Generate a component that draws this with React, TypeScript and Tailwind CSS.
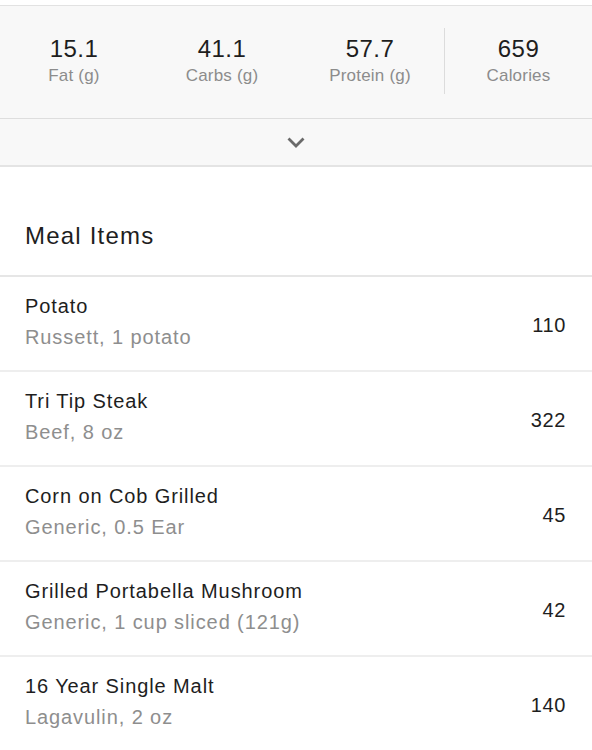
import React from "react";

const stats = [
  { v: "15.1", l: "Fat (g)" },
  { v: "41.1", l: "Carbs (g)" },
  { v: "57.7", l: "Protein (g)" },
  { v: "659", l: "Calories" },
];

const items = [
  { t: "Potato", s: "Russett, 1 potato", c: "110" },
  { t: "Tri Tip Steak", s: "Beef, 8 oz", c: "322" },
  { t: "Corn on Cob Grilled", s: "Generic, 0.5 Ear", c: "45" },
  { t: "Grilled Portabella Mushroom", s: "Generic, 1 cup sliced (121g)", c: "42" },
  { t: "16 Year Single Malt", s: "Lagavulin, 2 oz", c: "140" },
];

export default function App() {
  return (
    <div
      className="w-[592px] h-[750px] overflow-hidden bg-white text-[#222]"
      style={{ fontFamily: '"Liberation Sans", Arial, sans-serif' }}
    >
      <div className="h-[5px] bg-white" />
      <div className="bg-[#f8f8f8] border-t border-[#e2e2e2]">
        <div className="h-[113px] border-b border-[#dedede] flex items-start pt-[22px]">
          {stats.map((s, i) => (
            <div
              key={s.l}
              className={
                "w-[148px] h-[66px] flex flex-col items-center justify-center " +
                (i === 3 ? "border-l border-[#dcdcdc]" : "")
              }
            >
              <div className="text-[24px] leading-[28px] tracking-[0.5px] text-[#1e1e1e]">{s.v}</div>
              <div className="text-[17px] leading-[22px] mt-[2px] text-[#8c8c8c] tracking-[0.2px]">{s.l}</div>
            </div>
          ))}
        </div>
        <div className="h-[48px] border-b-2 border-[#e4e4e4] flex items-center justify-center">
          <svg width="18" height="12" viewBox="0 0 18 12">
            <path d="M1.5 2.5 L9 10 L16.5 2.5" fill="none" stroke="#6a6a6a" strokeWidth="2.8" />
          </svg>
        </div>
      </div>
      <div className="h-[110px] flex items-end pb-[24px] px-[25px] border-b-2 border-[#e6e6e6]">
        <div className="text-[24px] leading-[30px] tracking-[1.2px] text-[#1e1e1e]">Meal Items</div>
      </div>
      {items.map((it) => (
        <div
          key={it.t}
          className="h-[95px] border-b-2 border-[#eeeeee] flex items-center justify-between pl-[25px] pr-[26px]"
        >
          <div className="flex flex-col mb-[4px]">
            <div className="text-[20px] leading-[30px] tracking-[0.9px] text-[#1e1e1e]">{it.t}</div>
            <div className="text-[20px] leading-[30px] mt-[1px] tracking-[0.9px] text-[#8e8e8e]">{it.s}</div>
          </div>
          <div className="text-[20px] leading-[30px] tracking-[0.6px] text-[#1e1e1e] pt-[2px]">{it.c}</div>
        </div>
      ))}
    </div>
  );
}
